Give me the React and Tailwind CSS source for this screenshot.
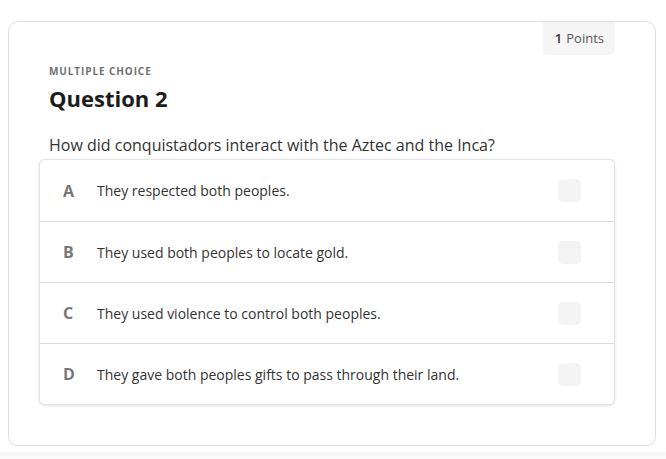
const options = [
  { letter: 'A', text: 'They respected both peoples.' },
  { letter: 'B', text: 'They used both peoples to locate gold.' },
  { letter: 'C', text: 'They used violence to control both peoples.' },
  { letter: 'D', text: 'They gave both peoples gifts to pass through their land.' },
]

function App() {
  return (
    <div className="w-[666px] h-[459px] bg-white overflow-hidden" style={{ fontFamily: '"Open Sans", sans-serif' }}>
      <div className="pt-[21px] pl-[8px] pr-[10px]">
        <div className="relative h-[425px] border border-[#dedede] rounded-[10px] bg-white">
          <div className="absolute right-[40px] top-0 h-[33px] pl-[12px] pr-[11px] pt-[1px] flex items-center bg-[#f5f5f5] rounded-b-[6px] text-[13px] text-[#555]">
            <span className="font-semibold text-[#333] mr-[4px]">1</span>
            <span>Points</span>
          </div>

          <div className="pt-[42px] px-[40px]">
            <p className="text-[10px] font-bold tracking-[0.9px] text-[#707070] leading-[14px]">MULTIPLE CHOICE</p>
            <h2 className="mt-[5px] text-[22px] font-bold text-[#1c1c1c] leading-[30px]">Question 2</h2>
            <p className="mt-[22px] text-[16px] text-[#333] leading-[20px]">
              How did conquistadors interact with the Aztec and the Inca?
            </p>
          </div>

          <div className="mt-[4px] ml-[30px] mr-[40px] border border-[#e3e3e3] rounded-[6px] shadow-[0_1px_3px_rgba(0,0,0,0.12)] bg-white">
            {options.map((option, i) => (
              <div
                key={option.letter}
                className={`flex items-center h-[61px] pl-[23px] pr-[33px] ${i > 0 ? 'border-t border-[#dcdcdc]' : ''}`}
              >
                <span className="w-[34px] text-[16px] font-bold text-[#777]">{option.letter}</span>
                <span className="flex-1 text-[14px] text-[#333]">{option.text}</span>
                <span className="w-[23px] h-[23px] rounded-[5px] bg-[#f3f3f3]"></span>
              </div>
            ))}
          </div>
        </div>
      </div>
      <div className="mt-[6px] h-[10px] bg-gradient-to-b from-[#f6f6f6] to-[#fbfbfb]"></div>
    </div>
  )
}

export default App
